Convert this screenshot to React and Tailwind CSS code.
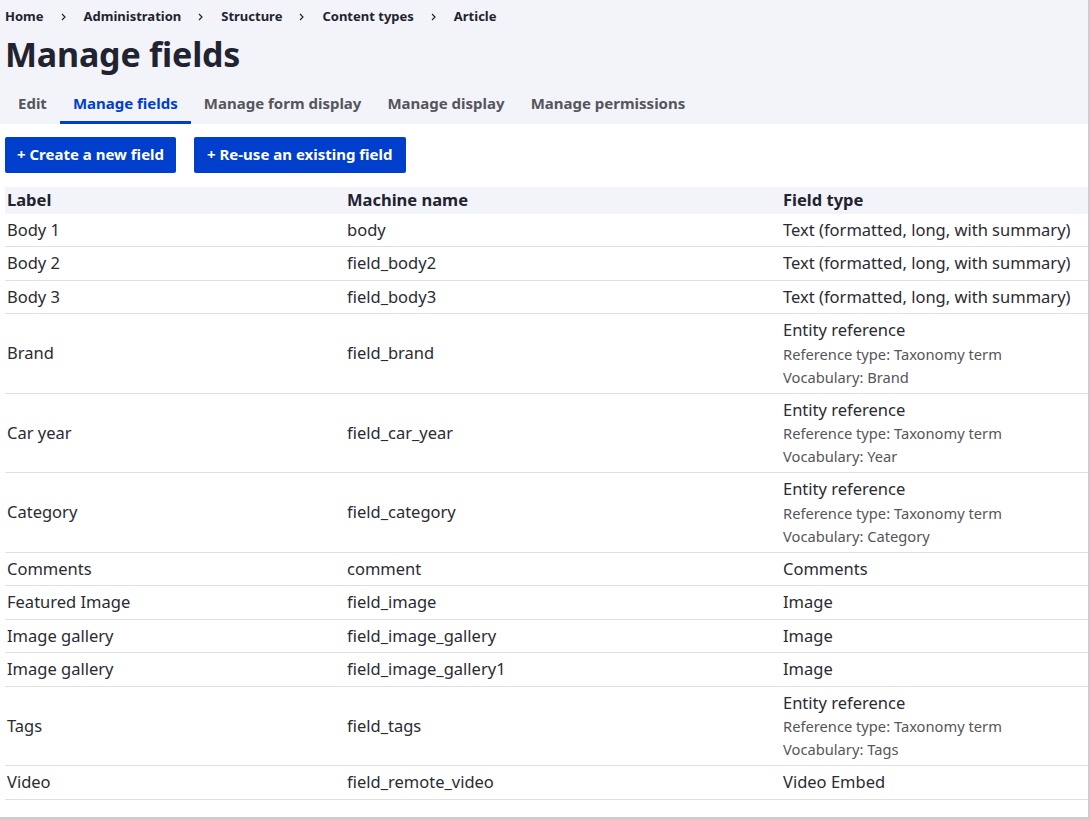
const crumbs = ['Home', 'Administration', 'Structure', 'Content types', 'Article'];
const tabs = ['Edit', 'Manage fields', 'Manage form display', 'Manage display', 'Manage permissions'];

const rows = [
  { label: 'Body 1', name: 'body', type: 'Text (formatted, long, with summary)' },
  { label: 'Body 2', name: 'field_body2', type: 'Text (formatted, long, with summary)' },
  { label: 'Body 3', name: 'field_body3', type: 'Text (formatted, long, with summary)' },
  { label: 'Brand', name: 'field_brand', type: 'Entity reference', vocab: 'Brand' },
  { label: 'Car year', name: 'field_car_year', type: 'Entity reference', vocab: 'Year' },
  { label: 'Category', name: 'field_category', type: 'Entity reference', vocab: 'Category' },
  { label: 'Comments', name: 'comment', type: 'Comments' },
  { label: 'Featured Image', name: 'field_image', type: 'Image' },
  { label: 'Image gallery', name: 'field_image_gallery', type: 'Image' },
  { label: 'Image gallery', name: 'field_image_gallery1', type: 'Image' },
  { label: 'Tags', name: 'field_tags', type: 'Entity reference', vocab: 'Tags' },
  { label: 'Video', name: 'field_remote_video', type: 'Video Embed' },
];

export default function App() {
  return (
    <div className="w-[1090px] h-[820px] overflow-hidden bg-white border-r-2 border-b-[3px] border-[#cdcdd0] text-[#222330] font-['Noto_Sans',sans-serif]">
      <div className="bg-[#f3f4f9]">
        <nav className="flex items-center h-[34px] pl-[5px] text-[13px] font-bold">
          {crumbs.map((c, i) => (
            <div key={c} className="flex items-center">
              {i > 0 && (
                <svg width="6" height="8" viewBox="0 0 6 8" className="mx-[17px]">
                  <path d="M1 1l3 3-3 3" fill="none" stroke="#222330" strokeWidth="1.2" />
                </svg>
              )}
              <span>{c}</span>
            </div>
          ))}
        </nav>
        <h1 className="pl-[5px] text-[34px] leading-[40px] font-bold tracking-[-0.2px]">Manage fields</h1>
        <div className="flex pl-[5px] pt-[16px] text-[15px] font-bold">
          {tabs.map((t, i) => (
            <div
              key={t}
              className={
                i === 1
                  ? 'px-[13px] pt-[2px] pb-[6px] border-b-[3px] border-[#003ecc] text-[#003ecc]'
                  : 'px-[13px] pt-[2px] pb-[6px] border-b-[3px] border-transparent text-[#55565b]'
              }
            >
              {t}
            </div>
          ))}
        </div>
      </div>

      <div className="flex gap-[18px] pl-[5px] pt-[13px]">
        <button className="h-[36px] px-[12px] rounded-[2px] bg-[#003ecc] text-white text-[15px] font-bold">+ Create a new field</button>
        <button className="h-[36px] px-[13px] rounded-[2px] bg-[#003ecc] text-white text-[15px] font-bold">+ Re-use an existing field</button>
      </div>

      <div className="ml-[5px] mt-[14px]">
        <div className="grid grid-cols-[340px_436px_1fr] bg-[#f3f4f9] h-[27px] items-center text-[16.5px] font-bold">
          <div className="pl-[2px]">Label</div>
          <div className="pl-[2px]">Machine name</div>
          <div className="pl-[2px]">Field type</div>
        </div>
        {rows.map((r, i) => (
          <div
            key={i}
            className="grid grid-cols-[340px_436px_1fr] items-center border-b border-[#dedfe4] py-[4px] text-[16.5px] leading-[24.5px] text-[#2a2b33]"
          >
            <div className="pl-[2px]">{r.label}</div>
            <div className="pl-[2px]">{r.name}</div>
            <div className="pl-[2px]">
              <div>{r.type}</div>
              {r.vocab && (
                <div className="text-[14.7px] leading-[23px] text-[#55565b]">
                  <div>Reference type: Taxonomy term</div>
                  <div>Vocabulary: {r.vocab}</div>
                </div>
              )}
            </div>
          </div>
        ))}
      </div>
    </div>
  );
}
